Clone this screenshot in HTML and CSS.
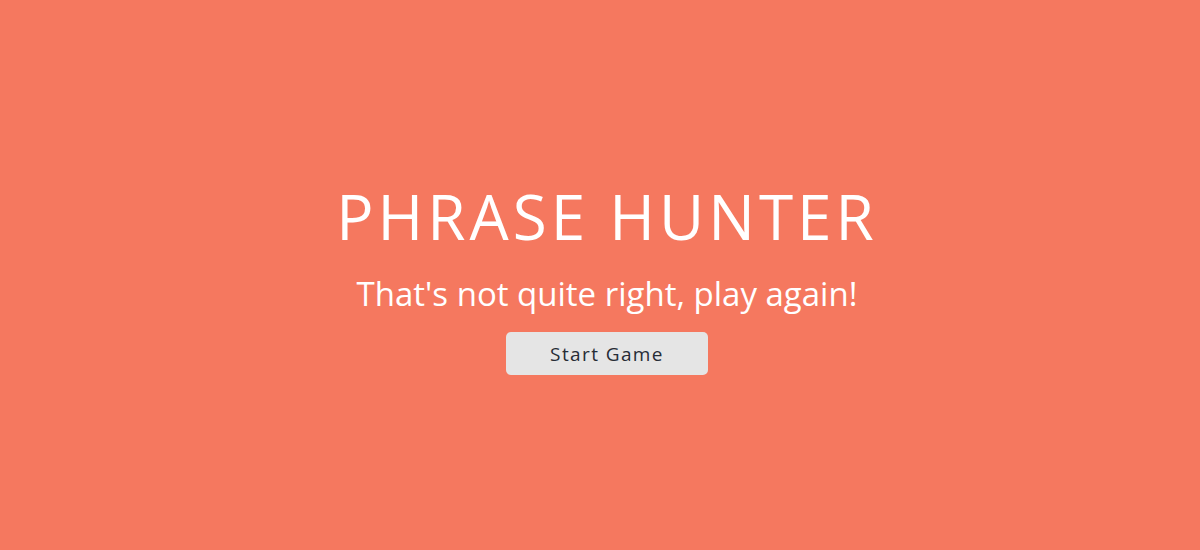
FILE: index.html
```html
<!DOCTYPE html>
<html lang="en">
<head>
<meta charset="utf-8">
<title>Phrase Hunter</title>
<link rel="stylesheet" href="styles.css">
</head>
<body>
<div class="overlay lose">
  <h2 class="title">PHRASE HUNTER</h2>
  <h1 class="game-over-message">That's not quite right, play again!</h1>
  <button class="btn-reset">Start Game</button>
</div>
</body>
</html>
```
FILE: styles.css
```css
html, body {
  margin: 0;
  padding: 0;
  height: 100%;
}
body {
  font-family: "Open Sans", "DejaVu Sans", sans-serif;
}
.overlay {
  box-sizing: border-box;
  height: 100%;
  display: flex;
  flex-direction: column;
  align-items: center;
  justify-content: center;
  color: #ffffff;
  padding: 10px 0 0 14px;
}
.lose {
  background-color: #f5785f;
}
.title {
  margin: 0;
  font-size: 62px;
  font-weight: 400;
  line-height: 1;
  letter-spacing: 4px;
}
.game-over-message {
  margin: 30px 0 0;
  font-size: 33px;
  font-weight: 400;
  line-height: 1;
}
.btn-reset {
  box-sizing: border-box;
  margin-top: 22px;
  width: 202px;
  height: 43px;
  padding: 0;
  border: none;
  border-radius: 5px;
  background-color: #e5e5e5;
  color: #272c35;
  font-family: "Open Sans", "DejaVu Sans", sans-serif;
  font-size: 19px;
  letter-spacing: 1.4px;
  cursor: pointer;
}
```
